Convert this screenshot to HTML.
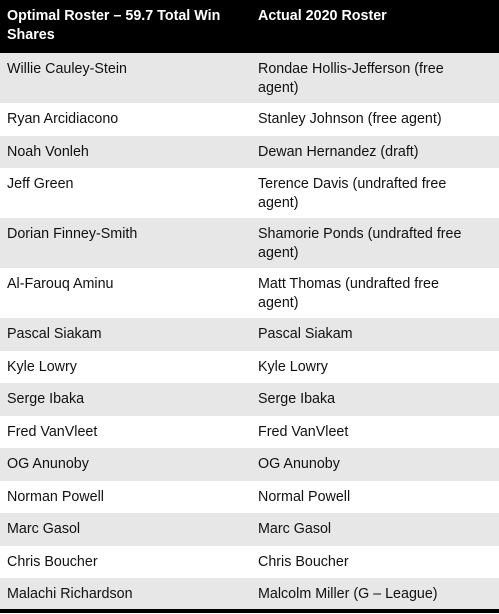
<!DOCTYPE html>
<html><head><style>
body{margin:0;width:499px;height:614px;overflow:hidden;background:#fff;font-family:"Liberation Sans",sans-serif;font-size:14.3px;color:#111}
table{border-collapse:collapse;width:499px;table-layout:fixed;border-bottom:4px solid #000}
td{vertical-align:top;padding:7px 7px 0 7px;line-height:19px;box-sizing:border-box;white-space:nowrap}
td:first-child{width:251px}
tr{height:32.5px}
tr.d{height:50px}
tr.h{height:53px;background:#000;color:#fff;font-weight:bold}
tr.h td{padding-top:7px}
tr.g{background:#e7e7e7}
</style></head><body>
<table>
<tr class="h"><td>Optimal Roster – 59.7 Total Win<br>Shares</td><td>Actual 2020 Roster</td></tr>
<tr class="d g"><td>Willie Cauley-Stein</td><td>Rondae Hollis-Jefferson (free<br>agent)</td></tr>
<tr><td>Ryan Arcidiacono</td><td>Stanley Johnson (free agent)</td></tr>
<tr class="g"><td>Noah Vonleh</td><td>Dewan Hernandez (draft)</td></tr>
<tr class="d"><td>Jeff Green</td><td>Terence Davis (undrafted free<br>agent)</td></tr>
<tr class="d g"><td>Dorian Finney-Smith</td><td>Shamorie Ponds (undrafted free<br>agent)</td></tr>
<tr class="d"><td>Al-Farouq Aminu</td><td>Matt Thomas (undrafted free<br>agent)</td></tr>
<tr class="g"><td>Pascal Siakam</td><td>Pascal Siakam</td></tr>
<tr><td>Kyle Lowry</td><td>Kyle Lowry</td></tr>
<tr class="g"><td>Serge Ibaka</td><td>Serge Ibaka</td></tr>
<tr><td>Fred VanVleet</td><td>Fred VanVleet</td></tr>
<tr class="g"><td>OG Anunoby</td><td>OG Anunoby</td></tr>
<tr><td>Norman Powell</td><td>Normal Powell</td></tr>
<tr class="g"><td>Marc Gasol</td><td>Marc Gasol</td></tr>
<tr><td>Chris Boucher</td><td>Chris Boucher</td></tr>
<tr class="g"><td>Malachi Richardson</td><td>Malcolm Miller (G – League)</td></tr>
</table>
</body></html>
